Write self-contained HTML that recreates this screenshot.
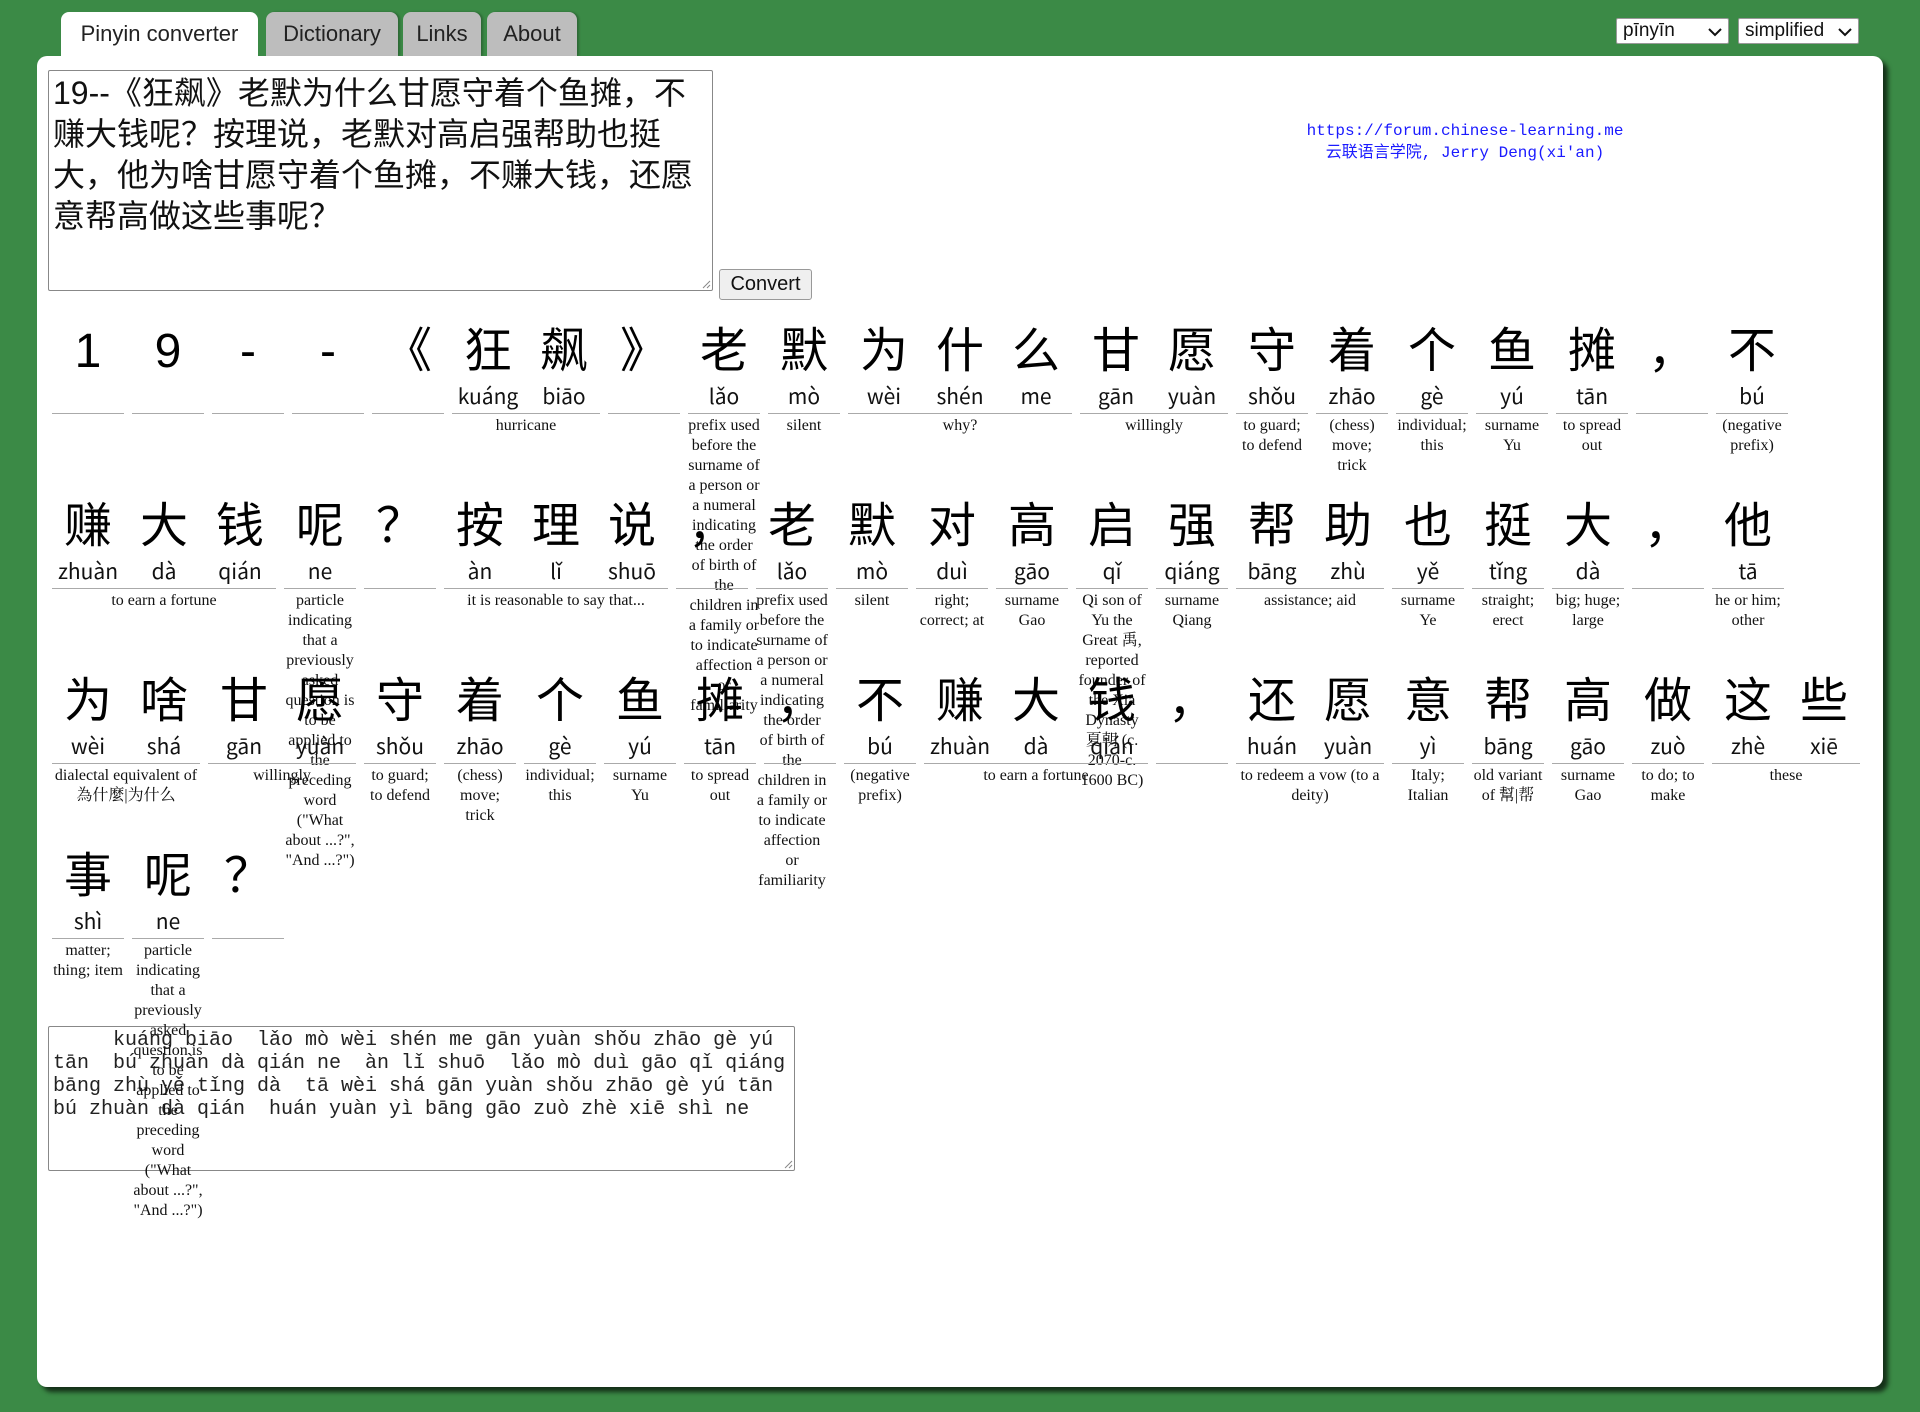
<!DOCTYPE html>
<html><head><meta charset="utf-8">
<style>
*{box-sizing:border-box;margin:0;padding:0}
html,body{width:1920px;height:1412px;overflow:hidden}
body{background:#3b8a46;font-family:"Liberation Sans","Noto Sans CJK SC",sans-serif;position:relative}
.tab{position:absolute;top:12px;height:44px;border-radius:8px 8px 0 0;font-size:22px;line-height:44px;text-align:center;color:#222;background:#bdbdbd;box-shadow:2px 0 2px rgba(0,0,0,.25)}
.tab.on{background:#fff;box-shadow:none;z-index:2}
.sel{position:absolute;top:18px;height:26px;background:#fff;border:1px solid #999;border-radius:2px;font-size:19px;line-height:24px;padding-left:6px;color:#111}
.sel svg{position:absolute;right:6px;top:8px}
#panel{position:absolute;left:37px;top:56px;width:1846px;height:1331px;background:#fff;border-radius:10px;box-shadow:5px 5px 5px rgba(0,0,0,.65)}
#ta{position:absolute;left:48px;top:70px;width:665px;height:221px;border:1px solid #888;border-radius:2px;padding:2px 4px;font-size:32px;line-height:41px;color:#111;font-family:"Liberation Sans","Noto Sans CJK SC",sans-serif;background:#fff;z-index:3}
.grip{position:absolute;right:1px;bottom:1px}
#btn{position:absolute;left:719px;top:269px;width:93px;height:31px;background:#efefef;border:1px solid #999;border-radius:3px;font-size:20px;line-height:29px;text-align:center;color:#111;z-index:3}
#link{position:absolute;left:1265px;top:120px;width:400px;text-align:center;font-family:"Liberation Mono","Noto Sans CJK SC",monospace;font-size:16px;line-height:22px;color:#1a1aff;z-index:3}
#grid{position:absolute;left:48px;top:322px;width:1830px;display:flex;flex-wrap:wrap;align-content:flex-start;z-index:2}
.w{margin:0 4px;height:175px}
.cs{display:flex;gap:4px;border-bottom:1px solid #aaa;padding-bottom:3px}
.c{width:72px;text-align:center}
.h{font-size:48px;line-height:60px;height:60px;color:#000;font-family:"Liberation Sans","Noto Sans CJK SC",sans-serif}
.p{font-size:21px;line-height:28px;height:28px;color:#111;font-family:"Noto Sans CJK SC","DejaVu Sans",sans-serif}
.d{font-family:"Liberation Serif","Noto Serif CJK SC",serif;font-size:16px;line-height:20px;text-align:center;color:#111;padding-top:2px}
#out{position:absolute;left:48px;top:1026px;width:747px;height:145px;border:1px solid #888;border-radius:2px;padding:2px 4px;font-family:"Liberation Mono","DejaVu Sans Mono",monospace;font-size:20px;line-height:23px;color:#222;white-space:pre;background:transparent;z-index:1}
</style></head><body>
<div class="tab on" style="left:61px;width:197px">Pinyin converter</div>
<div class="tab" style="left:266px;width:132px">Dictionary</div>
<div class="tab" style="left:403px;width:78px">Links</div>
<div class="tab" style="left:487px;width:90px">About</div>
<div class="sel" style="left:1616px;width:113px">pīnyīn<svg width="14" height="10" viewBox="0 0 14 10"><path d="M1 2 L7 8 L13 2" stroke="#111" stroke-width="2" fill="none"/></svg></div>
<div class="sel" style="left:1738px;width:121px">simplified<svg width="14" height="10" viewBox="0 0 14 10"><path d="M1 2 L7 8 L13 2" stroke="#111" stroke-width="2" fill="none"/></svg></div>
<div id="panel"></div>
<div id="ta">19--《狂飙》老默为什么甘愿守着个鱼摊，不赚大钱呢？按理说，老默对高启强帮助也挺大，他为啥甘愿守着个鱼摊，不赚大钱，还愿意帮高做这些事呢？<svg class="grip" width="10" height="10" viewBox="0 0 10 10"><path d="M9 2 L2 9 M9 6 L6 9" stroke="#888" stroke-width="1"/></svg></div>
<div id="btn">Convert</div>
<div id="link">https://forum.chinese-learning.me<br>云联语言学院, Jerry Deng(xi'an)</div>
<div id="grid">
<div class="w"><div class="cs"><div class="c"><div class="h">1</div><div class="p">&nbsp;</div></div></div><div class="d"></div></div>
<div class="w"><div class="cs"><div class="c"><div class="h">9</div><div class="p">&nbsp;</div></div></div><div class="d"></div></div>
<div class="w"><div class="cs"><div class="c"><div class="h">-</div><div class="p">&nbsp;</div></div></div><div class="d"></div></div>
<div class="w"><div class="cs"><div class="c"><div class="h">-</div><div class="p">&nbsp;</div></div></div><div class="d"></div></div>
<div class="w"><div class="cs"><div class="c"><div class="h">《</div><div class="p">&nbsp;</div></div></div><div class="d"></div></div>
<div class="w"><div class="cs"><div class="c"><div class="h">狂</div><div class="p">kuáng</div></div><div class="c"><div class="h">飙</div><div class="p">biāo</div></div></div><div class="d">hurricane</div></div>
<div class="w"><div class="cs"><div class="c"><div class="h">》</div><div class="p">&nbsp;</div></div></div><div class="d"></div></div>
<div class="w"><div class="cs"><div class="c"><div class="h">老</div><div class="p">lǎo</div></div></div><div class="d" style="width:72px">prefix used before the surname of a person or a numeral indicating the order of birth of the children in a family or to indicate affection or familiarity</div></div>
<div class="w"><div class="cs"><div class="c"><div class="h">默</div><div class="p">mò</div></div></div><div class="d">silent</div></div>
<div class="w"><div class="cs"><div class="c"><div class="h">为</div><div class="p">wèi</div></div><div class="c"><div class="h">什</div><div class="p">shén</div></div><div class="c"><div class="h">么</div><div class="p">me</div></div></div><div class="d">why?</div></div>
<div class="w"><div class="cs"><div class="c"><div class="h">甘</div><div class="p">gān</div></div><div class="c"><div class="h">愿</div><div class="p">yuàn</div></div></div><div class="d">willingly</div></div>
<div class="w"><div class="cs"><div class="c"><div class="h">守</div><div class="p">shǒu</div></div></div><div class="d" style="width:72px">to guard; to defend</div></div>
<div class="w"><div class="cs"><div class="c"><div class="h">着</div><div class="p">zhāo</div></div></div><div class="d" style="width:72px">(chess) move; trick</div></div>
<div class="w"><div class="cs"><div class="c"><div class="h">个</div><div class="p">gè</div></div></div><div class="d" style="width:72px">individual; this</div></div>
<div class="w"><div class="cs"><div class="c"><div class="h">鱼</div><div class="p">yú</div></div></div><div class="d" style="width:72px">surname Yu</div></div>
<div class="w"><div class="cs"><div class="c"><div class="h">摊</div><div class="p">tān</div></div></div><div class="d" style="width:72px">to spread out</div></div>
<div class="w"><div class="cs"><div class="c"><div class="h">，</div><div class="p">&nbsp;</div></div></div><div class="d"></div></div>
<div class="w"><div class="cs"><div class="c"><div class="h">不</div><div class="p">bú</div></div></div><div class="d" style="width:72px">(negative prefix)</div></div>

<div class="w"><div class="cs"><div class="c"><div class="h">赚</div><div class="p">zhuàn</div></div><div class="c"><div class="h">大</div><div class="p">dà</div></div><div class="c"><div class="h">钱</div><div class="p">qián</div></div></div><div class="d">to earn a fortune</div></div>
<div class="w"><div class="cs"><div class="c"><div class="h">呢</div><div class="p">ne</div></div></div><div class="d" style="width:72px">particle indicating that a previously asked question is to be applied to the preceding word ("What about ...?", "And ...?")</div></div>
<div class="w"><div class="cs"><div class="c"><div class="h">？</div><div class="p">&nbsp;</div></div></div><div class="d"></div></div>
<div class="w"><div class="cs"><div class="c"><div class="h">按</div><div class="p">àn</div></div><div class="c"><div class="h">理</div><div class="p">lǐ</div></div><div class="c"><div class="h">说</div><div class="p">shuō</div></div></div><div class="d">it is reasonable to say that...</div></div>
<div class="w"><div class="cs"><div class="c"><div class="h">，</div><div class="p">&nbsp;</div></div></div><div class="d"></div></div>
<div class="w"><div class="cs"><div class="c"><div class="h">老</div><div class="p">lǎo</div></div></div><div class="d" style="width:72px">prefix used before the surname of a person or a numeral indicating the order of birth of the children in a family or to indicate affection or familiarity</div></div>
<div class="w"><div class="cs"><div class="c"><div class="h">默</div><div class="p">mò</div></div></div><div class="d">silent</div></div>
<div class="w"><div class="cs"><div class="c"><div class="h">对</div><div class="p">duì</div></div></div><div class="d" style="width:72px">right; correct; at</div></div>
<div class="w"><div class="cs"><div class="c"><div class="h">高</div><div class="p">gāo</div></div></div><div class="d" style="width:72px">surname Gao</div></div>
<div class="w"><div class="cs"><div class="c"><div class="h">启</div><div class="p">qǐ</div></div></div><div class="d" style="width:72px">Qi son of Yu the Great 禹, reported founder of the Xia Dynasty 夏朝 (c. 2070-c. 1600 BC)</div></div>
<div class="w"><div class="cs"><div class="c"><div class="h">强</div><div class="p">qiáng</div></div></div><div class="d" style="width:72px">surname Qiang</div></div>
<div class="w"><div class="cs"><div class="c"><div class="h">帮</div><div class="p">bāng</div></div><div class="c"><div class="h">助</div><div class="p">zhù</div></div></div><div class="d">assistance; aid</div></div>
<div class="w"><div class="cs"><div class="c"><div class="h">也</div><div class="p">yě</div></div></div><div class="d" style="width:72px">surname Ye</div></div>
<div class="w"><div class="cs"><div class="c"><div class="h">挺</div><div class="p">tǐng</div></div></div><div class="d" style="width:72px">straight; erect</div></div>
<div class="w"><div class="cs"><div class="c"><div class="h">大</div><div class="p">dà</div></div></div><div class="d" style="width:72px">big; huge; large</div></div>
<div class="w"><div class="cs"><div class="c"><div class="h">，</div><div class="p">&nbsp;</div></div></div><div class="d"></div></div>
<div class="w"><div class="cs"><div class="c"><div class="h">他</div><div class="p">tā</div></div></div><div class="d" style="width:72px">he or him; other</div></div>

<div class="w"><div class="cs"><div class="c"><div class="h">为</div><div class="p">wèi</div></div><div class="c"><div class="h">啥</div><div class="p">shá</div></div></div><div class="d" style="width:148px">dialectal equivalent of 為什麼|为什么</div></div>
<div class="w"><div class="cs"><div class="c"><div class="h">甘</div><div class="p">gān</div></div><div class="c"><div class="h">愿</div><div class="p">yuàn</div></div></div><div class="d">willingly</div></div>
<div class="w"><div class="cs"><div class="c"><div class="h">守</div><div class="p">shǒu</div></div></div><div class="d" style="width:72px">to guard; to defend</div></div>
<div class="w"><div class="cs"><div class="c"><div class="h">着</div><div class="p">zhāo</div></div></div><div class="d" style="width:72px">(chess) move; trick</div></div>
<div class="w"><div class="cs"><div class="c"><div class="h">个</div><div class="p">gè</div></div></div><div class="d" style="width:72px">individual; this</div></div>
<div class="w"><div class="cs"><div class="c"><div class="h">鱼</div><div class="p">yú</div></div></div><div class="d" style="width:72px">surname Yu</div></div>
<div class="w"><div class="cs"><div class="c"><div class="h">摊</div><div class="p">tān</div></div></div><div class="d" style="width:72px">to spread out</div></div>
<div class="w"><div class="cs"><div class="c"><div class="h">，</div><div class="p">&nbsp;</div></div></div><div class="d"></div></div>
<div class="w"><div class="cs"><div class="c"><div class="h">不</div><div class="p">bú</div></div></div><div class="d" style="width:72px">(negative prefix)</div></div>
<div class="w"><div class="cs"><div class="c"><div class="h">赚</div><div class="p">zhuàn</div></div><div class="c"><div class="h">大</div><div class="p">dà</div></div><div class="c"><div class="h">钱</div><div class="p">qián</div></div></div><div class="d">to earn a fortune</div></div>
<div class="w"><div class="cs"><div class="c"><div class="h">，</div><div class="p">&nbsp;</div></div></div><div class="d"></div></div>
<div class="w"><div class="cs"><div class="c"><div class="h">还</div><div class="p">huán</div></div><div class="c"><div class="h">愿</div><div class="p">yuàn</div></div></div><div class="d" style="width:148px">to redeem a vow (to a deity)</div></div>
<div class="w"><div class="cs"><div class="c"><div class="h">意</div><div class="p">yì</div></div></div><div class="d" style="width:72px">Italy; Italian</div></div>
<div class="w"><div class="cs"><div class="c"><div class="h">帮</div><div class="p">bāng</div></div></div><div class="d" style="width:72px">old variant of 幫|帮</div></div>
<div class="w"><div class="cs"><div class="c"><div class="h">高</div><div class="p">gāo</div></div></div><div class="d" style="width:72px">surname Gao</div></div>
<div class="w"><div class="cs"><div class="c"><div class="h">做</div><div class="p">zuò</div></div></div><div class="d" style="width:72px">to do; to make</div></div>
<div class="w"><div class="cs"><div class="c"><div class="h">这</div><div class="p">zhè</div></div><div class="c"><div class="h">些</div><div class="p">xiē</div></div></div><div class="d">these</div></div>

<div class="w"><div class="cs"><div class="c"><div class="h">事</div><div class="p">shì</div></div></div><div class="d" style="width:72px">matter; thing; item</div></div>
<div class="w"><div class="cs"><div class="c"><div class="h">呢</div><div class="p">ne</div></div></div><div class="d" style="width:72px">particle indicating that a previously asked question is to be applied to the preceding word ("What about ...?", "And ...?")</div></div>
<div class="w"><div class="cs"><div class="c"><div class="h">？</div><div class="p">&nbsp;</div></div></div><div class="d"></div></div>
</div>
<div id="out">     kuáng biāo  lǎo mò wèi shén me gān yuàn shǒu zhāo gè yú
tān  bú zhuàn dà qián ne  àn lǐ shuō  lǎo mò duì gāo qǐ qiáng
bāng zhù yě tǐng dà  tā wèi shá gān yuàn shǒu zhāo gè yú tān
bú zhuàn dà qián  huán yuàn yì bāng gāo zuò zhè xiē shì ne<svg class="grip" style="position:absolute;right:1px;bottom:1px" width="10" height="10" viewBox="0 0 10 10"><path d="M9 2 L2 9 M9 6 L6 9" stroke="#888" stroke-width="1"/></svg></div>
</body></html>
